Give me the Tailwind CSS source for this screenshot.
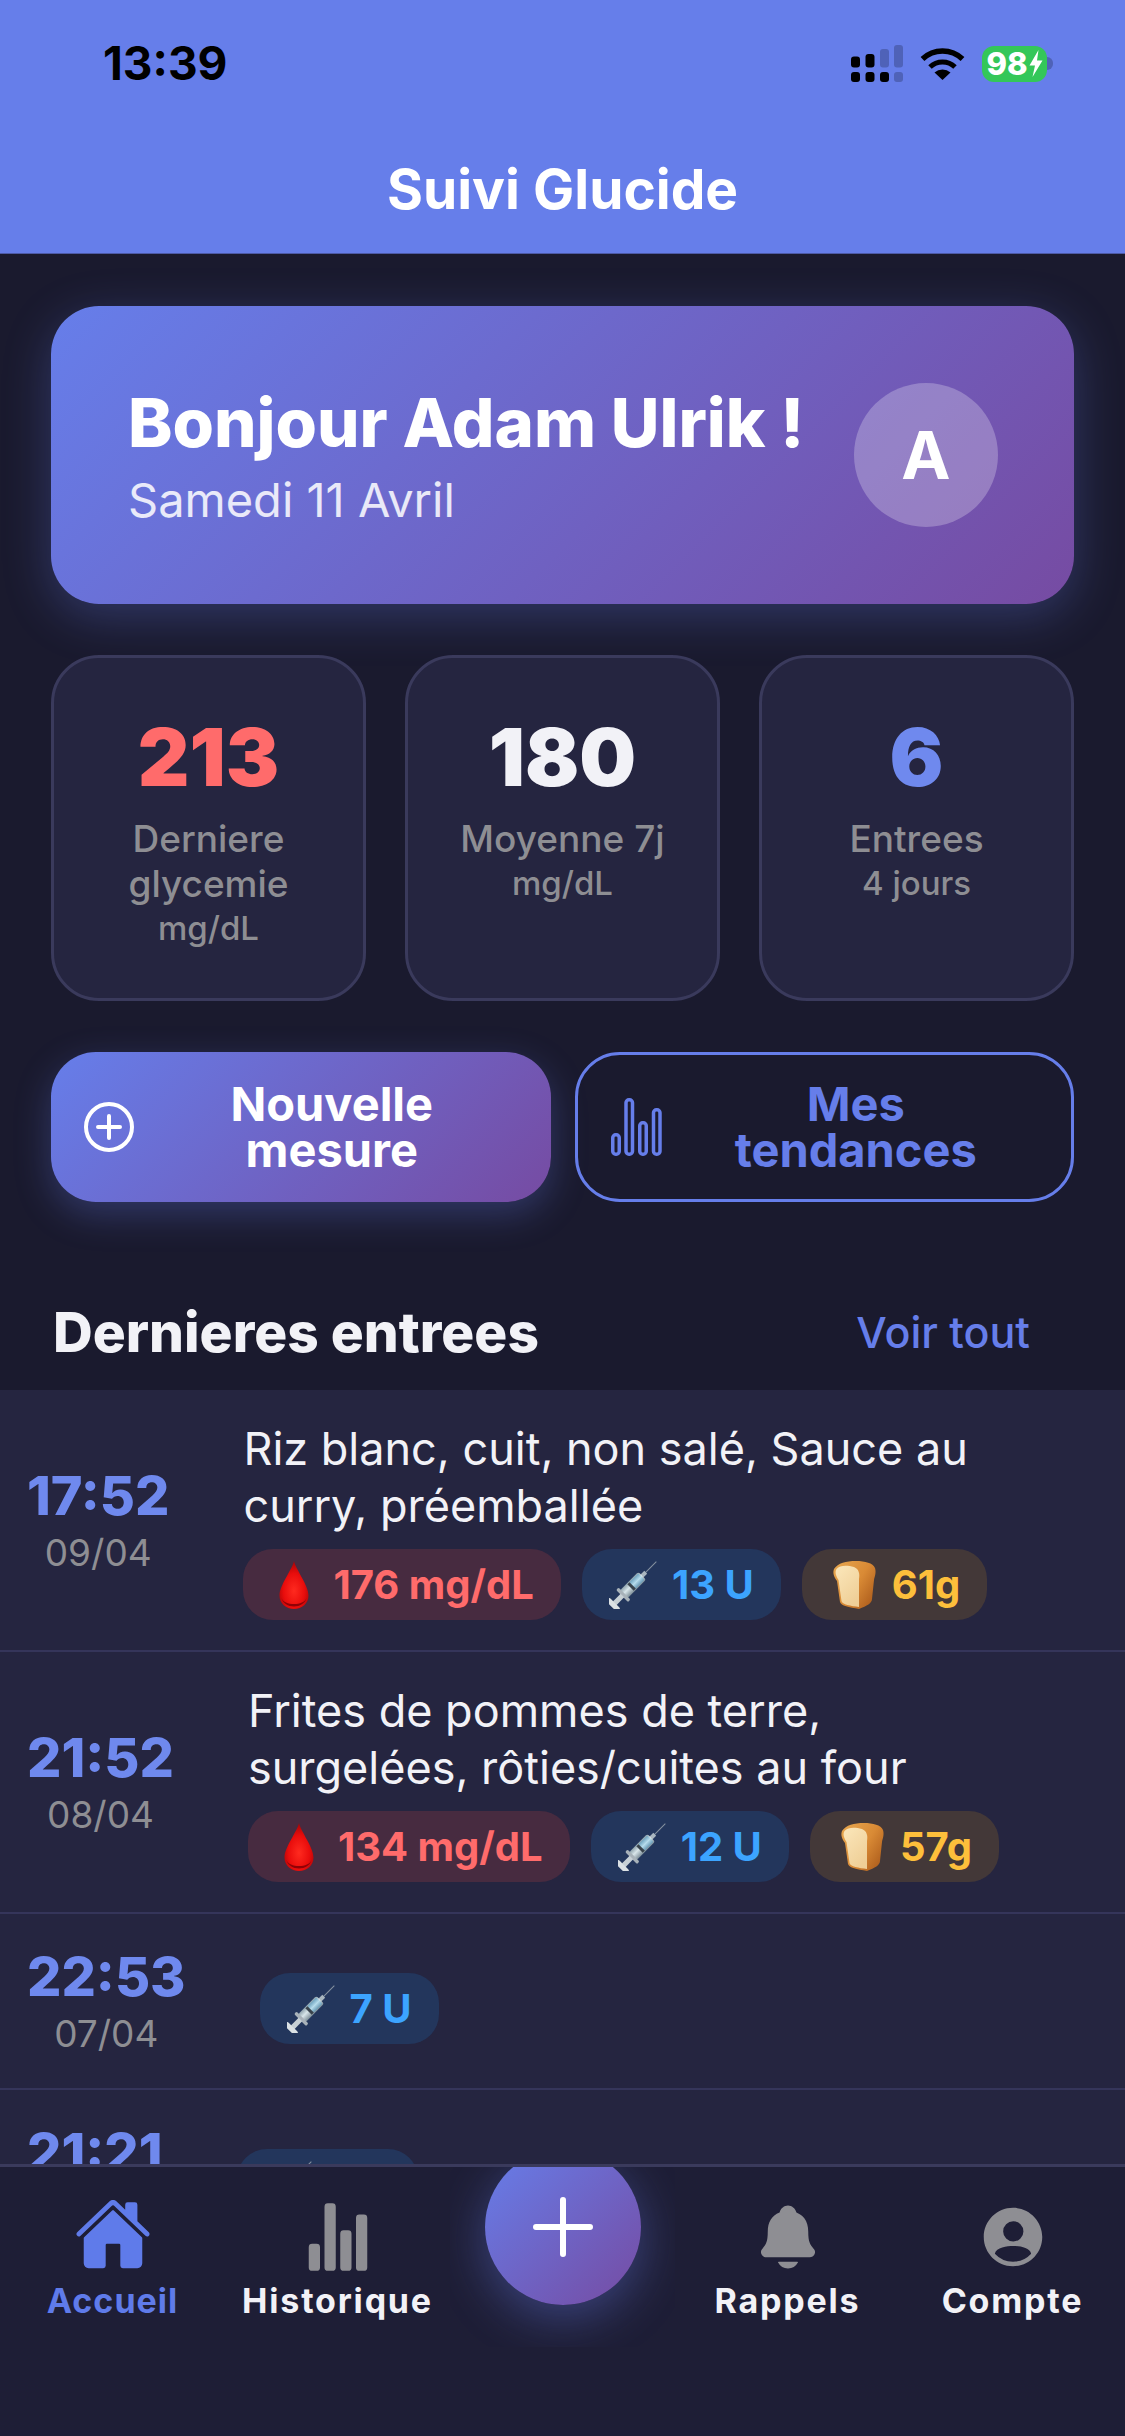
<!DOCTYPE html>
<html lang="fr">
<head>
    <meta charset="UTF-8">
    <meta name="viewport" content="width=device-width, initial-scale=1.0">
    <title>Suivi Glucide</title>
    <script src="https://cdn.jsdelivr.net/npm/@tailwindcss/browser@4"></script>
</head>
<body class="bg-[#1a1a2e] font-['Inter',sans-serif] [font-optical-sizing:none]">
    <!-- emoji drawings, reused in the badges -->
    <svg class="block w-0 h-0" aria-hidden="true">
        <defs>
            <radialGradient id="dropFill" cx="0.5" cy="0.62" r="0.6">
                <stop offset="0" stop-color="#ff2a1f"/>
                <stop offset="0.6" stop-color="#e90d0c"/>
                <stop offset="1" stop-color="#a80508"/>
            </radialGradient>
            <linearGradient id="barrelFill" x1="0" y1="0" x2="1" y2="0">
                <stop offset="0" stop-color="#8fa3ad"/>
                <stop offset="0.45" stop-color="#d9e6ea"/>
                <stop offset="1" stop-color="#7e8f99"/>
            </linearGradient>
            <linearGradient id="liquidFill" x1="0" y1="0" x2="1" y2="0">
                <stop offset="0" stop-color="#6fa3bf"/>
                <stop offset="0.5" stop-color="#b6dcec"/>
                <stop offset="1" stop-color="#6a9ab5"/>
            </linearGradient>
            <linearGradient id="crustFill" x1="0" y1="0" x2="1" y2="0.7">
                <stop offset="0" stop-color="#e8a850"/>
                <stop offset="0.6" stop-color="#d98a35"/>
                <stop offset="1" stop-color="#b2621f"/>
            </linearGradient>
            <linearGradient id="crumbFill" x1="0" y1="0" x2="0.6" y2="1">
                <stop offset="0" stop-color="#fbe7bb"/>
                <stop offset="1" stop-color="#efcf97"/>
            </linearGradient>
            <symbol id="drop" viewBox="0 0 48 48">
                <path d="M24 0C22 9 9.500 24 9.500 34.500C9.500 42.500 16 48 24 48C32 48 38.500 42.500 38.500 34.500C38.500 24 26 9 24 0Z" fill="url(#dropFill)"/>
                <path d="M11.500 37C13 42.500 18 45.500 24 45.500C30 45.500 35 42.500 36.500 37C35 41 30 43 24 43C18 43 13 41 11.500 37Z" fill="#8f0206"/>
            </symbol>
            <symbol id="syringe" viewBox="0 0 48 48">
                <g transform="rotate(45 24 24)">
                    <rect x="23.500" y="-9" width="1" height="20" fill="#8793a0"/>
                    <rect x="22" y="6" width="4" height="6" fill="#a9b6bf"/>
                    <rect x="18.500" y="11" width="11" height="26" rx="2" fill="url(#barrelFill)"/>
                    <rect x="19.500" y="12" width="9" height="13" rx="1.500" fill="url(#liquidFill)"/>
                    <rect x="19.500" y="24.500" width="9" height="3" fill="#39434c"/>
                    <rect x="15.500" y="36" width="17" height="3.500" rx="1.500" fill="#a8b2b9"/>
                    <rect x="21.500" y="39" width="5" height="11" fill="#c7d0d5"/>
                    <rect x="16" y="49.500" width="16" height="5" rx="2" fill="#dbe1e4"/>
                </g>
            </symbol>
            <symbol id="bread" viewBox="0 0 48 48">
                <path d="M5 8C9 2 17 0 27 0C36 0 44 2 46 7C47.500 12 45.500 16 45 19L43 38C43 42 38 45 30 48C20 46 12 45 11 41L8 20C5 16 3.500 12 5 8Z" fill="url(#crustFill)"/>
                <path d="M7.500 8C11 4 18 4 25 6C30 8 31 13 30 18L30 46C22 45 13 43.500 12.500 40L9.500 19C7 15 5.500 11 7.500 8Z" fill="url(#crumbFill)"/>
            </symbol>
            <symbol id="chartFill" viewBox="0 0 512 512">
                <path fill="currentColor" d="M104 496H72a24 24 0 01-24-24V328a24 24 0 0124-24h32a24 24 0 0124 24v144a24 24 0 01-24 24zM328 496h-32a24 24 0 01-24-24V232a24 24 0 0124-24h32a24 24 0 0124 24v240a24 24 0 01-24 24zM440 496h-32a24 24 0 01-24-24V120a24 24 0 0124-24h32a24 24 0 0124 24v352a24 24 0 01-24 24zM216 496h-32a24 24 0 01-24-24V40a24 24 0 0124-24h32a24 24 0 0124 24v432a24 24 0 01-24 24z"/>
            </symbol>
        </defs>
    </svg>

    <div class="w-[1125px] h-[2436px] flex flex-col overflow-hidden">
        <!-- header + status bar -->
        <header class="h-[254px] shrink-0 bg-[#667eea] border-b border-[#4d5aa6]">
            <div class="h-[37px] mt-[45px] pl-[103px] pr-[72px] flex items-center justify-between">
                <span class="text-[46px] leading-[37px] font-bold text-black">13:39</span>
                <div class="flex items-center">
                    <svg class="w-[52px] h-[37px]" viewBox="0 0 52 37">
                        <rect x="0" y="11.500" width="9" height="11" rx="3" fill="#000"/>
                        <rect x="14.500" y="9" width="9" height="13.500" rx="3" fill="#000"/>
                        <rect x="29" y="4" width="9" height="18.500" rx="3" fill="#4f62b8"/>
                        <rect x="43" y="0" width="9" height="22.500" rx="3" fill="#4f62b8"/>
                        <rect x="0" y="27" width="9" height="10" rx="3" fill="#000"/>
                        <rect x="14.500" y="27" width="9" height="10" rx="3" fill="#000"/>
                        <rect x="29" y="27" width="9" height="10" rx="3" fill="#000"/>
                        <rect x="43" y="27" width="9" height="10" rx="3" fill="#4f62b8"/>
                    </svg>
                    <svg class="w-[45px] h-[33px] ml-[17px]" viewBox="0 0 45 33">
                        <path d="M2.500 12A29 29 0 0 1 42.500 12" fill="none" stroke="#000" stroke-width="5.500"/>
                        <path d="M10 20A18 18 0 0 1 35 20" fill="none" stroke="#000" stroke-width="5"/>
                        <path d="M22.500 33L14.500 25.500A12 12 0 0 1 30.500 25.500Z" fill="#000"/>
                    </svg>
                    <div class="ml-[17px] w-[65px] h-[36px] rounded-[12px] bg-[#34c759] flex items-center justify-center gap-[1px]">
                        <span class="text-[31px] leading-[36px] font-extrabold text-white">98</span>
                        <svg class="w-[14px] h-[27px]" viewBox="0 0 14 27"><path d="M9.500 0L0.500 15.500H6L3.500 27L13.500 10.500H8Z" fill="#fff"/></svg>
                    </div>
                    <div class="w-[6px] h-[13px] rounded-r-full bg-[#4f62b8]"></div>
                </div>
            </div>
            <h1 class="mt-[77px] text-center text-[55px] leading-[60px] font-bold text-white">Suivi Glucide</h1>
        </header>

        <main class="flex-1 min-h-0 overflow-hidden flex flex-col">
            <div class="px-[51px] pt-[52px]">
                <!-- greeting -->
                <section class="h-[298px] rounded-[48px] bg-[linear-gradient(135deg,#667eea,#764ba2)] shadow-[0_12px_48px_rgba(102,126,234,0.3)] pl-[77px] pr-[76px] flex items-center justify-between">
                    <div>
                        <p class="text-[67px] leading-[78px] font-extrabold text-white whitespace-nowrap">Bonjour Adam Ulrik !</p>
                        <p class="text-[47px] leading-[54px] text-white/85 mt-[11px]">Samedi 11 Avril</p>
                    </div>
                    <div class="w-[144px] h-[144px] shrink-0 rounded-full bg-white/25 flex items-center justify-center text-[66px] font-bold text-white">A</div>
                </section>

                <!-- stats -->
                <section class="mt-[51px] grid grid-cols-3 gap-[39px]">
                    <div class="rounded-[48px] bg-[#252540] border-[3px] border-[#3a3a5c] pt-[52px] pb-[47px] px-[21px] text-center">
                        <p class="text-[80px] leading-[94px] font-black text-[#ff6b6b]">213</p>
                        <p class="mt-[12px] text-[37px] leading-[45px] font-medium text-[#8e8e93]">Derniere glycemie</p>
                        <p class="text-[33px] leading-[45px] font-medium text-[#8e8e93]">mg/dL</p>
                    </div>
                    <div class="rounded-[48px] bg-[#252540] border-[3px] border-[#3a3a5c] pt-[52px] pb-[47px] px-[21px] text-center">
                        <p class="text-[80px] leading-[94px] font-black text-[#f2f2f7]">180</p>
                        <p class="mt-[12px] text-[37px] leading-[45px] font-medium text-[#8e8e93]">Moyenne 7j</p>
                        <p class="text-[33px] leading-[45px] font-medium text-[#8e8e93]">mg/dL</p>
                    </div>
                    <div class="rounded-[48px] bg-[#252540] border-[3px] border-[#3a3a5c] pt-[52px] pb-[47px] px-[21px] text-center">
                        <p class="text-[80px] leading-[94px] font-black text-[#6f89ee]">6</p>
                        <p class="mt-[12px] text-[37px] leading-[45px] font-medium text-[#8e8e93]">Entrees</p>
                        <p class="text-[33px] leading-[45px] font-medium text-[#8e8e93]">4 jours</p>
                    </div>
                </section>

                <!-- actions -->
                <section class="mt-[51px] grid grid-cols-2 gap-[24px]">
                    <button class="h-[150px] rounded-[45px] bg-[linear-gradient(135deg,#667eea,#764ba2)] shadow-[0_12px_36px_rgba(102,126,234,0.3)] px-[33px] flex items-center gap-[12px]">
                        <svg class="w-[50px] h-[50px] shrink-0" viewBox="0 0 50 50" fill="none" stroke="#fff" stroke-width="4" stroke-linecap="round">
                            <circle cx="25" cy="25" r="23"/>
                            <path d="M25 14V36M14 25H36"/>
                        </svg>
                        <span class="flex-1 text-[47px] leading-[46px] font-bold text-white">Nouvelle<br>mesure</span>
                    </button>
                    <button class="h-[150px] rounded-[45px] border-[3px] border-[#667eea] pl-[33px] pr-[33px] flex items-center gap-[12px]">
                        <svg class="w-[51px] h-[58px] shrink-0" viewBox="0 0 51 58" fill="none" stroke="#667eea" stroke-width="3.500">
                            <rect x="1.750" y="36.750" width="6.500" height="19.500" rx="3"/>
                            <rect x="15" y="1.750" width="6.500" height="54.500" rx="3"/>
                            <rect x="28.750" y="24.750" width="6.500" height="31.500" rx="3"/>
                            <rect x="42.500" y="11.750" width="6.500" height="44.500" rx="3"/>
                        </svg>
                        <span class="flex-1 text-[47px] leading-[46px] font-bold text-[#667eea]">Mes<br>tendances</span>
                    </button>
                </section>

                <div class="mt-[100px] h-[88px] pl-[2px] pr-[44px] flex items-start justify-between">
                    <h2 class="text-[55px] leading-[60px] font-extrabold text-[#f2f2f7]">Dernieres entrees</h2>
                    <a class="text-[43px] leading-[60px] font-medium text-[#667eea]">Voir tout</a>
                </div>
            </div>

            <!-- entries -->
            <section class="bg-[#252540] flex-1">
                <div class="px-[27px] py-[30px] flex items-center gap-[74px] border-b-[2px] border-[#35355a]">
                    <div class="text-center shrink-0 w-max">
                        <p class="text-[54px] leading-[66px] font-extrabold text-[#6f89ee]">17:52</p>
                        <p class="text-[37px] leading-[48px] text-[#8e8e93]">09/04</p>
                    </div>
                    <div class="pr-[90px]">
                        <p class="text-[45px] leading-[57px] text-[#f2f2f7]">Riz blanc, cuit, non salé, Sauce au curry, préemballée</p>
                        <div class="mt-[15px] flex gap-[21px]">
                            <span class="h-[71px] rounded-[30px] bg-[#472b40] px-[27px] flex items-center gap-[15px] text-[40px] font-bold text-[#ff6b6b] whitespace-nowrap"><svg class="w-[48px] h-[48px]"><use href="#drop"/></svg>176 mg/dL</span>
                            <span class="h-[71px] rounded-[30px] bg-[#23365c] px-[27px] flex items-center gap-[15px] text-[40px] font-bold text-[#3ca4ff] whitespace-nowrap"><svg class="w-[48px] h-[48px]"><use href="#syringe"/></svg>13 U</span>
                            <span class="h-[71px] rounded-[30px] bg-[#433838] px-[27px] flex items-center gap-[15px] text-[40px] font-bold text-[#fdbf3b] whitespace-nowrap"><svg class="w-[48px] h-[48px]"><use href="#bread"/></svg>61g</span>
                        </div>
                    </div>
                </div>

                <div class="px-[27px] py-[30px] flex items-center gap-[74px] border-b-[2px] border-[#35355a]">
                    <div class="text-center shrink-0 w-max">
                        <p class="text-[54px] leading-[66px] font-extrabold text-[#6f89ee]">21:52</p>
                        <p class="text-[37px] leading-[48px] text-[#8e8e93]">08/04</p>
                    </div>
                    <div class="pr-[90px]">
                        <p class="text-[45px] leading-[57px] text-[#f2f2f7]">Frites de pommes de terre, surgelées, rôties/cuites au four</p>
                        <div class="mt-[15px] flex gap-[21px]">
                            <span class="h-[71px] rounded-[30px] bg-[#472b40] px-[27px] flex items-center gap-[15px] text-[40px] font-bold text-[#ff6b6b] whitespace-nowrap"><svg class="w-[48px] h-[48px]"><use href="#drop"/></svg>134 mg/dL</span>
                            <span class="h-[71px] rounded-[30px] bg-[#23365c] px-[27px] flex items-center gap-[15px] text-[40px] font-bold text-[#3ca4ff] whitespace-nowrap"><svg class="w-[48px] h-[48px]"><use href="#syringe"/></svg>12 U</span>
                            <span class="h-[71px] rounded-[30px] bg-[#433838] px-[27px] flex items-center gap-[15px] text-[40px] font-bold text-[#fdbf3b] whitespace-nowrap"><svg class="w-[48px] h-[48px]"><use href="#bread"/></svg>57g</span>
                        </div>
                    </div>
                </div>

                <div class="px-[27px] py-[30px] flex items-center gap-[74px] border-b-[2px] border-[#35355a]">
                    <div class="text-center shrink-0 w-max">
                        <p class="text-[54px] leading-[66px] font-extrabold text-[#6f89ee]">22:53</p>
                        <p class="text-[37px] leading-[48px] text-[#8e8e93]">07/04</p>
                    </div>
                    <div>
                        <div class="mt-[15px] flex gap-[21px]">
                            <span class="h-[71px] rounded-[30px] bg-[#23365c] px-[27px] flex items-center gap-[15px] text-[40px] font-bold text-[#3ca4ff] whitespace-nowrap"><svg class="w-[48px] h-[48px]"><use href="#syringe"/></svg>7 U</span>
                        </div>
                    </div>
                </div>

                <div class="px-[27px] py-[30px] flex items-center gap-[74px]">
                    <div class="text-center shrink-0 w-max">
                        <p class="text-[54px] leading-[66px] font-extrabold text-[#6f89ee]">21:21</p>
                        <p class="text-[37px] leading-[48px] text-[#8e8e93]">06/04</p>
                    </div>
                    <div>
                        <div class="mt-[15px] flex gap-[21px]">
                            <span class="h-[71px] rounded-[30px] bg-[#23365c] px-[27px] flex items-center gap-[15px] text-[40px] font-bold text-[#3ca4ff] whitespace-nowrap"><svg class="w-[48px] h-[48px]"><use href="#syringe"/></svg>6 U</span>
                        </div>
                    </div>
                </div>
            </section>
        </main>

        <!-- tab bar -->
        <nav class="h-[272px] shrink-0 bg-[#1e1e36] border-t-[3px] border-[#3a3a5c] grid grid-cols-5">
            <a class="pt-[28px] flex flex-col items-center">
                <span class="h-[78px] flex items-end text-[#5f7bea]">
                    <svg class="w-[78px] h-[78px]" viewBox="0 0 512 512" fill="currentColor">
                        <path d="M261.560 101.280a8 8 0 00-11.060 0L66.400 277.150a8 8 0 00-2.470 5.790L63.900 448a32 32 0 0032 32H192a16 16 0 0016-16V328a8 8 0 018-8h80a8 8 0 018 8v136a16 16 0 0016 16h96.060a32 32 0 0032-32V282.940a8 8 0 00-2.470-5.790z"/>
                        <path d="M490.910 244.150l-74.800-71.560V64a16 16 0 00-16-16h-48a16 16 0 00-16 16v32l-57.920-55.380C272.770 35.140 264.710 32 256 32c-8.680 0-16.720 3.140-22.140 8.630l-212.700 203.500c-6.220 6-7 15.870-1.340 22.370A16 16 0 0043 267.560L250.500 69.280a8 8 0 0111.060 0l207.520 198.280a16 16 0 0022.590-.44c6.140-6.360 5.630-16.860-.76-22.970z"/>
                    </svg>
                </span>
                <span class="mt-[8px] text-[34px] leading-[40px] font-bold tracking-[1px] text-[#5f7bea]">Accueil</span>
            </a>
            <a class="pt-[28px] flex flex-col items-center">
                <span class="h-[78px] flex items-end text-[#8e8e93]"><svg class="w-[72px] h-[72px]"><use href="#chartFill"/></svg></span>
                <span class="mt-[8px] text-[34px] leading-[40px] font-bold tracking-[1.8px] text-[#f2f2f7]">Historique</span>
            </a>
            <div class="h-[180px] overflow-hidden flex justify-center">
                <button class="w-[156px] h-[156px] -mt-[18px] shrink-0 rounded-full bg-[linear-gradient(135deg,#667eea,#764ba2)] shadow-[0_12px_48px_rgba(102,126,234,0.4)] flex items-center justify-center">
                    <svg class="w-[60px] h-[60px]" viewBox="0 0 60 60" fill="none" stroke="#fff" stroke-width="6" stroke-linecap="round"><path d="M30 3V57M3 30H57"/></svg>
                </button>
            </div>
            <a class="pt-[28px] flex flex-col items-center">
                <span class="h-[78px] flex items-end text-[#8e8e93]">
                    <svg class="w-[72px] h-[72px]" viewBox="0 0 512 512" fill="currentColor"><path d="M440.080 341.310c-1.660-2-3.290-4-4.890-5.930-22-26.610-35.310-42.670-35.310-118 0-39-9.330-71-27.720-95-13.560-17.730-31.890-31.180-56.050-41.120a3 3 0 01-.82-.67C306.600 51.490 282.820 32 256 32s-50.590 19.490-59.280 48.560a3.130 3.130 0 01-.81.650c-56.380 23.210-83.780 67.740-83.780 136.140 0 75.360-13.290 91.420-35.310 118-1.600 1.930-3.230 3.890-4.890 5.930a35.160 35.160 0 00-4.650 37.620c6.170 13 19.320 21.070 34.330 21.070H410.500c14.940 0 28-8.060 34.190-21a35.170 35.170 0 00-4.610-37.660zM256 480a80.060 80.060 0 0070.440-42.130 4 4 0 00-3.540-5.870H189.120a4 4 0 00-3.550 5.870A80.060 80.060 0 00256 480z"/></svg>
                </span>
                <span class="mt-[8px] text-[34px] leading-[40px] font-bold tracking-[1.8px] text-[#f2f2f7]">Rappels</span>
            </a>
            <a class="pt-[28px] flex flex-col items-center">
                <span class="h-[78px] flex items-end text-[#8e8e93]">
                    <svg class="w-[72px] h-[72px]" viewBox="0 0 512 512" fill="currentColor"><path d="M256 48C141.310 48 48 141.310 48 256s93.310 208 208 208 208-93.310 208-208S370.690 48 256 48zm2 96a72 72 0 11-72 72 72 72 0 0172-72zm-2 288a175.550 175.550 0 01-129.180-56.600C135.660 329.620 215.060 320 256 320s120.340 9.620 129.180 55.390A175.520 175.520 0 01256 432z"/></svg>
                </span>
                <span class="mt-[8px] text-[34px] leading-[40px] font-bold tracking-[1.8px] text-[#f2f2f7]">Compte</span>
            </a>
        </nav>
    </div>
</body>
</html>
